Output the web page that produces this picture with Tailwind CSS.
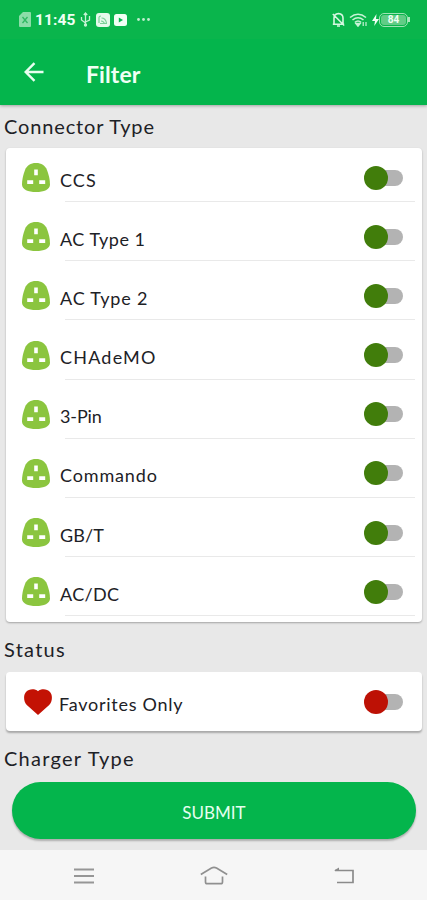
<!DOCTYPE html>
<html lang="en">
<head>
<meta charset="utf-8">
<title>Filter</title>
<script src="https://cdn.jsdelivr.net/npm/@tailwindcss/browser@4"></script>
</head>
<body class="w-[427px] h-[900px] overflow-hidden bg-[#e8e8e8] font-[Lato,sans-serif] text-[#1d2126]">
<svg class="hidden">
  <symbol id="plug" viewBox="0 0 28 29"><path fill="#8bc53f" d="M14 0C19.500 0 23 2.300 25 7C26.700 11.500 28 16.500 28 21.500C28 26.500 22 29 14 29S0 26.500 0 21.500C0 16.500 1.300 11.500 3 7C5 2.300 8.500 0 14 0Z"/><path fill="#fff" d="M12.200 6.500h3.600v5.700h-3.600zM5.200 17.300h6v3.600h-6zM17.200 17.300h6v3.600h-6z"/></symbol>
</svg>
<div class="h-full flex flex-col">
  <header class="relative h-[105px] shrink-0 bg-[#04b54c] shadow-[0_1px_3px_rgba(0,0,0,0.3)] text-[#f0fff4]">
    <div class="h-[39px] bg-[#0ab54c] flex items-center justify-between pl-[19px] pr-[17px]">
      <div class="flex items-center">
        <svg class="w-[12px] h-[15px]" viewBox="0 0 12 15"><path fill="#8bdda8" d="M4 0h7a1 1 0 0 1 1 1v13a1 1 0 0 1-1 1H1a1 1 0 0 1-1-1V4z"/><path d="M3.500 5l5 6M8.500 5l-5 6" fill="none" stroke="#2fb862" stroke-width="1.300"/></svg>
        <span class="ml-[4px] w-[41px] pt-[1px] font-[Roboto,sans-serif] font-bold text-[15.500px] leading-[20px] tracking-[0.100px] whitespace-nowrap">11:45</span>
        <svg class="ml-[4px] w-[11px] h-[15px]" viewBox="0 0 11 15" fill="none" stroke="#c6f2d4" stroke-width="1.300"><path d="M5.500 2v11M1.500 5v3l4 3M9.500 4v4l-4 2M3.800 3L5.500 1l1.700 2"/><circle cx="5.500" cy="13" r="1" fill="#c6f2d4"/></svg>
        <svg class="ml-[5px] w-[14px] h-[14px]" viewBox="0 0 14 14"><rect width="14" height="14" rx="3" fill="#e4faeb"/><path d="M3 10V4.500q0-1.500 2-1.500M5.500 5q4 0 5 5M5 8q3 0 3.500 3M4 10.500h7" fill="none" stroke="#7ad198" stroke-width="1.200"/></svg>
        <svg class="ml-[4px] w-[13px] h-[12px]" viewBox="0 0 13 12"><rect width="13" height="12" rx="2.500" fill="#f1fff5"/><path d="M4.800 3.500L9 6 4.800 8.500z" fill="#04b54c"/></svg>
        <svg class="ml-[10px] w-[13px] h-[3px]" viewBox="0 0 13 3" fill="#c0efcf"><circle cx="1.500" cy="1.500" r="1.400"/><circle cx="6.500" cy="1.500" r="1.400"/><circle cx="11.500" cy="1.500" r="1.400"/></svg>
      </div>
      <div class="flex items-center">
        <svg class="w-[13px] h-[15px]" viewBox="0 0 13 15" fill="none" stroke="#d5f7e0" stroke-width="1.600"><path d="M2 12V6q0-4 4.500-4.500Q11 2 11 6v6M.8 12.200h11.400M5 14h3M.8 2l11.400 11.500"/></svg>
        <svg class="ml-[4px] w-[19px] h-[14px]" viewBox="0 0 19 14" fill="none" stroke="#c8f3d6" stroke-width="1.600"><path d="M1 4.500q8-6.500 16 0M3.500 7q5.500-4.500 11 0M6 9.300q3-2.600 6 0"/><path d="M7 10.500h4l-2 2.500z" fill="#c8f3d6"/><path d="M14.200 9v4M17 9v4" stroke-width="1.200"/></svg>
        <svg class="ml-[4px] w-[7px] h-[12px]" viewBox="0 0 7 12"><path fill="#f1fff5" d="M4.500 0L0 7h3l-.8 5L7 5H4z"/></svg>
        <div class="w-[29px] h-[14px] rounded-[5px] border border-[#9de3b4] p-[1px]"><div class="h-full rounded-[3px] bg-[#61cc86] text-center font-[Roboto,sans-serif] font-bold text-[10px] leading-[10px]">84</div></div>
        <div class="w-[2px] h-[5px] bg-[#a9e7bd]"></div>
      </div>
    </div>
    <div class="h-[66px] flex items-center pl-[24px]">
      <svg class="w-[20px] h-[20px] -mt-[1px]" viewBox="0 0 20 20" fill="none" stroke="#e8fff0" stroke-width="2.400"><path d="M19.500 10H2M10.500 1.200L1.700 10l8.800 8.800"/></svg>
      <h1 class="ml-[42px] mt-[4px] font-bold text-[23px] leading-[28px] tracking-[0.100px]">Filter</h1>
    </div>
  </header>
  <main class="h-[745px] shrink-0">
    <h2 class="h-[43px] pl-[4px] pt-[9px] text-[20px] leading-[24px] tracking-[0.850px]">Connector Type</h2>
    <section class="ml-[6px] w-[416px] h-[474px] rounded-[4px] bg-white shadow-[0_1px_2px_rgba(0,0,0,0.3)]" id="connectors"></section>
    <h2 class="h-[50px] pl-[4px] pt-[15px] text-[20px] leading-[24px] tracking-[1.250px]">Status</h2>
    <section class="ml-[6px] w-[416px] h-[59px] rounded-[4px] bg-white shadow-[0_2px_2px_rgba(0,0,0,0.28)] flex items-center pl-[18px] pr-[19px]">
      <svg class="w-[28px] h-[26px]" viewBox="0 0 28 26"><path fill="#c31204" d="M14 26L2.800 16C-.5 12.500-.8 6 2 3C5-.5 11-.5 14 2.200C17-.5 23-.5 26 3C28.800 6 28.500 12.500 25.200 16Z"/></svg>
      <span class="ml-[7px] mt-[5px] flex-1 text-[18px] leading-[22px] tracking-[0.750px]">Favorites Only</span>
      <div class="relative w-[39px] h-[24px] flex items-center justify-end"><div class="w-[34px] h-[16px] rounded-full bg-[#b3b3b3]"></div><div class="absolute left-0 top-0 size-[24px] rounded-full bg-[#bd1105]"></div></div>
    </section>
    <h2 class="h-[51px] pl-[4px] pt-[15px] text-[20px] leading-[24px] tracking-[1.250px]">Charger Type</h2>
    <button class="block ml-[12px] w-[404px] h-[57px] rounded-full bg-[#04b54c] text-[#e6fff0] text-[17px] leading-[22px] pt-[4px] shadow-[0_2px_2px_rgba(0,0,0,0.25)]">SUBMIT</button>
  </main>
  <nav class="h-[50px] shrink-0 bg-[#f6f6f6] flex items-center justify-between pt-[1px] pl-[74px] pr-[73px]">
    <svg class="w-[20px] h-[16px]" viewBox="0 0 20 16" stroke="#969696" stroke-width="1.800"><path d="M0 1.500h20M0 8h20M0 14.500h20"/></svg>
    <svg class="w-[28px] h-[19px]" viewBox="0 0 28 19" fill="none" stroke="#909090" stroke-width="1.700"><path d="M.8 8.500L11.500 2q2.500-1.200 5 0l10.700 6.500M5.500 10.500V16q0 1.700 1.700 1.700h13.600q1.700 0 1.700-1.700v-5.500"/></svg>
    <svg class="w-[20px] h-[17px]" viewBox="0 0 20 17"><path d="M1 3.500h18v12H3" fill="none" stroke="#8b8b8b" stroke-width="1.700"/><path d="M0 3.500L5 .5v3z" fill="#8b8b8b"/></svg>
  </nav>
</div>
<script>
const rows = [
  ['CCS', 'tracking-[1.100px]'], ['AC Type 1', 'tracking-[0.500px]'], ['AC Type 2', 'tracking-[0.800px]'], ['CHAdeMO', 'tracking-[1.200px]'],
  ['3-Pin', 'tracking-[-0.100px]'], ['Commando', 'tracking-[0.850px]'], ['GB/T', 'tracking-[0.100px]'], ['AC/DC', 'tracking-[0.300px]'],
];
document.getElementById('connectors').innerHTML = rows.map(([name, track]) => `
  <div class="h-[59.200px] first:h-[54px] flex flex-col justify-end pl-[16px] pr-[19px]">
    <div class="flex items-center h-[29px]">
      <svg class="w-[28px] h-[29px]"><use href="#plug"/></svg>
      <span class="ml-[10px] mt-[4px] flex-1 text-[18px] leading-[22px] ${track}">${name}</span>
      <div class="relative w-[39px] h-[24px] flex items-center justify-end"><div class="w-[34px] h-[16px] rounded-full bg-[#b3b3b3]"></div><div class="absolute left-0 top-0 size-[24px] rounded-full bg-[#417d0b]"></div></div>
    </div>
    <div class="mt-[9px] ml-[43px] -mr-[12px] h-px bg-[#e9e9e9]"></div>
  </div>`).join('');
</script>
</body>
</html>
